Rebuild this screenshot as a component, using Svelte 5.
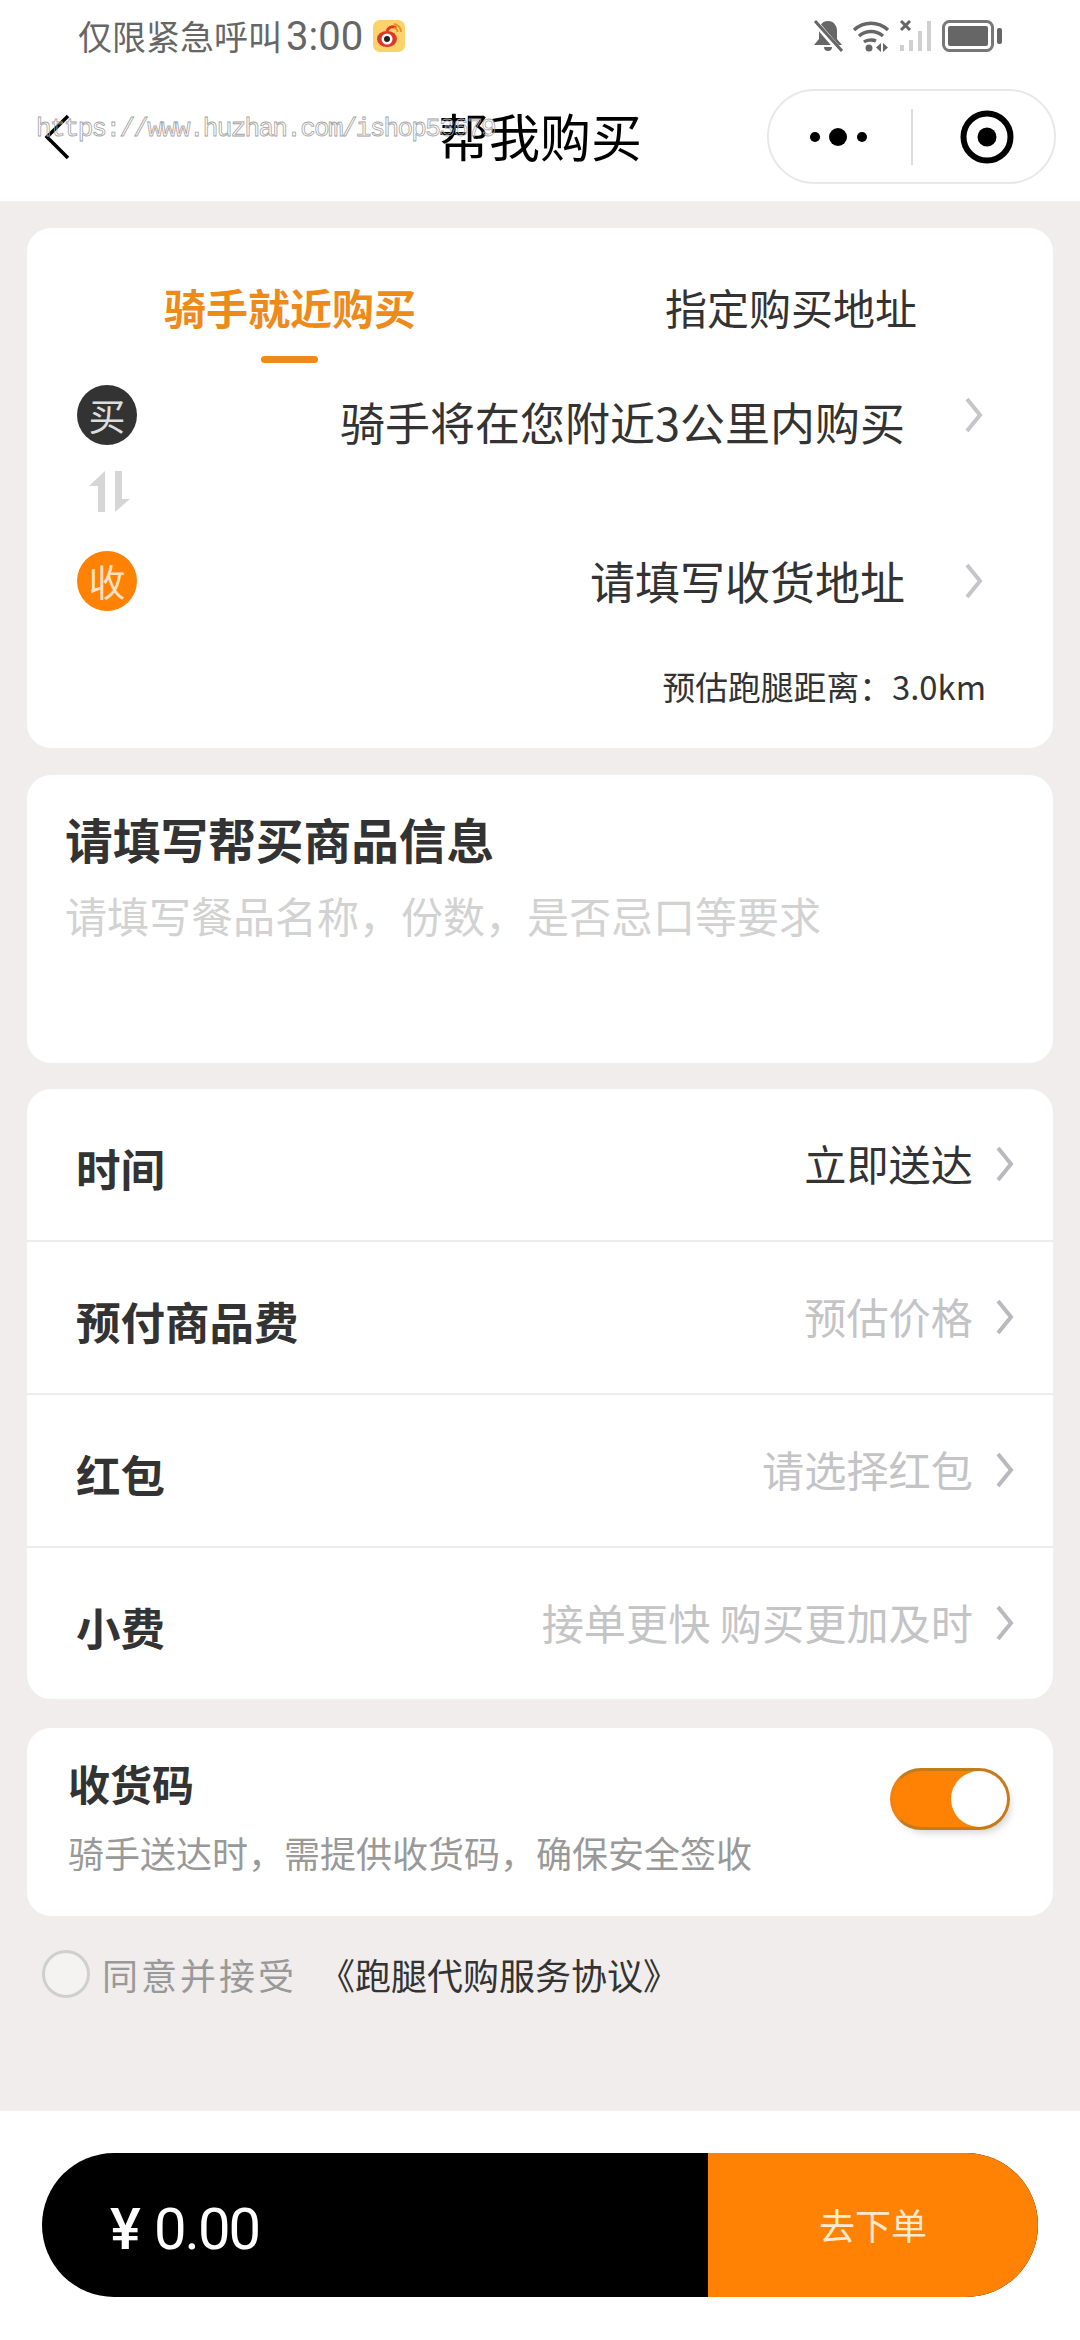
<script>
  const rows = [
    { label: '时间', value: '立即送达', dark: true },
    { label: '预付商品费', value: '预估价格' },
    { label: '红包', value: '请选择红包' },
    { label: '小费', value: '接单更快 购买更加及时' }
  ];
</script>

<div class="page">
  <header class="head">
    <div class="status">
      <div class="status-left">
        <span class="status-text">仅限紧急呼叫<span class="clock">3:00</span></span>
        <svg class="weibo" width="32" height="32" viewBox="0 0 32 32">
          <rect width="32" height="32" rx="7" fill="#fbd36a" />
          <ellipse cx="14" cy="19" rx="10" ry="8" fill="#e0352b" />
          <path d="M14 11c2-5 7-5 9-3" fill="none" stroke="#e0352b" stroke-width="3" />
          <circle cx="14" cy="19" r="5.5" fill="#fff" />
          <circle cx="14" cy="19" r="3" fill="#222" />
          <path d="M21 4a8 8 0 0 1 7 8M21 8a4 4 0 0 1 3.500 4" fill="none" stroke="#e8912a" stroke-width="1.800" />
        </svg>
      </div>
      <div class="status-right">
        <svg width="30" height="32" viewBox="0 0 30 32">
          <path d="M15 1c6 0 9 5 9 10v8l5 6H1l5-6v-8c0-5 3-10 9-10zM11 27h8a4 4 0 0 1-8 0z" fill="#666" />
          <path d="M1 1l26 30" stroke="#fff" stroke-width="6" />
          <path d="M2 1l27 30" stroke="#666" stroke-width="3" />
        </svg>
        <svg width="38" height="32" viewBox="0 0 38 32">
          <path d="M2 10c10-9 24-9 34 0M7 16c7-6 17-6 24 0M12 22c2-1.500 8-3 12-1" fill="none" stroke="#666" stroke-width="3.400" />
          <circle cx="17" cy="28" r="3.500" fill="#666" />
          <path d="M29 23v9l-5-4.500zM31 23v9l5-4.500z" fill="#666" />
        </svg>
        <svg width="34" height="32" viewBox="0 0 34 32">
          <path d="M2 1l9 9M11 1l-9 9" stroke="#666" stroke-width="3" />
          <rect x="1" y="25" width="4" height="6" fill="#d0d0d0" />
          <rect x="10" y="20" width="4" height="11" fill="#d0d0d0" />
          <rect x="19" y="11" width="4" height="20" fill="#d0d0d0" />
          <rect x="28" y="1" width="4" height="30" fill="#d0d0d0" />
        </svg>
        <svg width="60" height="32" viewBox="0 0 60 32">
          <rect x="1.500" y="1.500" width="49" height="29" rx="6" fill="none" stroke="#777" stroke-width="3" />
          <rect x="6" y="6" width="40" height="20" rx="2" fill="#666" />
          <rect x="55" y="8" width="5" height="16" rx="2" fill="#666" />
        </svg>
      </div>
    </div>
    <div class="nav">
      <svg class="back" width="30" height="48" viewBox="0 0 30 48">
        <path d="M24 3L3 24l21 21" fill="none" stroke="#000" stroke-width="3.500" />
      </svg>
      <h1>帮我购买</h1>
      <span class="watermark">https://www.huzhan.com/ishop53679</span>
      <div class="capsule">
        <svg width="58" height="20" viewBox="0 0 58 20">
          <circle cx="5" cy="10" r="5" fill="#000" />
          <circle cx="28" cy="10" r="9" fill="#000" />
          <circle cx="52" cy="10" r="5" fill="#000" />
        </svg>
        <i class="cap-line"></i>
        <svg width="54" height="54" viewBox="0 0 54 54">
          <circle cx="27" cy="27" r="23.500" fill="none" stroke="#000" stroke-width="6" />
          <circle cx="27" cy="27" r="9.500" fill="#000" />
        </svg>
      </div>
    </div>
  </header>

  <main class="main">
    <section class="card route">
      <div class="tabs">
        <div class="tab on">骑手就近购买<i></i></div>
        <div class="tab">指定购买地址</div>
      </div>
      <div class="addr">
        <span class="dot black">买</span>
        <span class="addr-text first">骑手将在您附近3公里内购买</span>
        <svg class="chev" width="20" height="36" viewBox="0 0 20 36"><path d="M3 2l13 16L3 34" fill="none" stroke="#c4c6cb" stroke-width="4" /></svg>
      </div>
      <div class="swap">
        <svg width="41" height="41" viewBox="0 0 41 41">
          <path d="M16 0v41H9V15H0zM26 0h7v28h8L26 41z" fill="#d6d6d6" />
        </svg>
      </div>
      <div class="addr">
        <span class="dot orange">收</span>
        <span class="addr-text">请填写收货地址</span>
        <svg class="chev" width="20" height="36" viewBox="0 0 20 36"><path d="M3 2l13 16L3 34" fill="none" stroke="#c4c6cb" stroke-width="4" /></svg>
      </div>
      <p class="dist">预估跑腿距离：3.0km</p>
    </section>

    <section class="card goods">
      <h2>请填写帮买商品信息</h2>
      <p>请填写餐品名称，份数，是否忌口等要求</p>
    </section>

    <section class="card list">
      {#each rows as r}
        <div class="row">
          <span class="row-label">{r.label}</span>
          <span class="row-value" class:dark={r.dark}>{r.value}</span>
          <svg class="chev" width="20" height="36" viewBox="0 0 20 36"><path d="M3 2l13 16L3 34" fill="none" stroke="#b8babf" stroke-width="4" /></svg>
        </div>
      {/each}
    </section>

    <section class="card code">
      <div>
        <h3>收货码</h3>
        <p>骑手送达时，需提供收货码，确保安全签收</p>
      </div>
      <div class="switch"><i></i></div>
    </section>

    <div class="agree">
      <i class="radio"></i>
      <span class="agree-a">同意并接受</span>
      <span class="agree-b">《跑腿代购服务协议》</span>
    </div>
  </main>

  <footer class="foot">
    <div class="pay">
      <div class="price"><span class="yen">¥</span><span class="amount">0.00</span></div>
      <div class="go">去下单</div>
    </div>
  </footer>
</div>

<style>
  :global(body) {
    margin: 0;
    background: #f0edec;
  }
  .page {
    width: 1080px;
    height: 2340px;
    display: flex;
    flex-direction: column;
    background: #f0edec;
    font-family: "Noto Sans CJK SC", "Noto Sans", sans-serif;
    color: #333;
  }
  .head {
    height: 201px;
    flex: none;
    background: #fff;
    display: flex;
    flex-direction: column;
  }
  .status {
    height: 72px;
    padding: 0 78px 0 78px;
    display: flex;
    align-items: center;
    justify-content: space-between;
  }
  .status-left,
  .status-right {
    display: flex;
    align-items: center;
  }
  .status-left {
    gap: 10px;
  }
  .status-right {
    gap: 9px;
  }
  .status-text {
    font-size: 34px;
    line-height: 44px;
    color: #666;
  }
  .clock {
    margin-left: 4px;
    font-family: "Roboto", sans-serif;
    font-size: 40px;
  }
  .nav {
    position: relative;
    flex: 1;
    display: flex;
    align-items: center;
    padding: 0 24px 0 44px;
  }
  .back {
    flex: none;
    position: relative;
  }
  .nav h1 {
    position: absolute;
    left: 0;
    right: 0;
    top: 32px;
    margin: 0;
    text-align: center;
    font-size: 51px;
    line-height: 62px;
    font-weight: 400;
    color: #000;
  }
  .capsule {
    margin-left: auto;
    width: 289px;
    height: 95px;
    box-sizing: border-box;
    border: 2px solid #e8e8e8;
    border-radius: 48px;
    display: flex;
    align-items: center;
    padding: 0 0 0 41px;
    position: relative;
  }
  .cap-line {
    width: 2px;
    height: 56px;
    background: #ddd;
    margin: 0 47px 0 43px;
  }
  .watermark {
    position: absolute;
    left: 36px;
    top: 42px;
    font-family: "Liberation Mono", monospace;
    font-size: 26px;
    letter-spacing: -1.700px;
    line-height: 30px;
    color: transparent;
    -webkit-text-stroke: 0.800px #a4a4a4;
    white-space: nowrap;
  }
  .main {
    flex: 1;
    padding: 27px 27px 0;
    display: flex;
    flex-direction: column;
  }
  .card {
    background: #fff;
    border-radius: 24px;
  }
  .route {
    height: 520px;
    margin-bottom: 27px;
    padding: 0 68px 0 50px;
    box-sizing: border-box;
  }
  .tabs {
    height: 156px;
    display: flex;
    margin-right: -68px;
    margin-left: -50px;
    padding-left: 137px;
    padding-top: 52px;
    box-sizing: border-box;
  }
  .tab {
    font-size: 42px;
    line-height: 54px;
    position: relative;
    color: #333;
    flex: none;
  }
  .tab.on {
    color: #ee8a1a;
    font-weight: 700;
    width: 501px;
  }
  .tab i {
    position: absolute;
    left: 97px;
    top: 76px;
    width: 57px;
    height: 7px;
    border-radius: 4px;
    background: #ee8a1a;
  }
  .addr {
    display: flex;
    align-items: center;
    height: 62px;
  }
  .dot {
    width: 60px;
    height: 60px;
    flex: none;
    border-radius: 50%;
    display: flex;
    align-items: center;
    justify-content: center;
    font-size: 37px;
    line-height: 1;
  }
  .dot.black {
    background: #333;
    color: #ddd;
  }
  .dot.orange {
    background: #ff8205;
    color: #ffe2c4;
  }
  .addr-text {
    margin-left: auto;
    font-size: 45px;
    line-height: 56px;
    color: #333;
  }
  .addr-text.first {
    margin-top: 14px;
  }
  .addr .chev {
    margin-left: 59px;
    margin-right: 1px;
    flex: none;
  }
  .swap {
    height: 104px;
    box-sizing: border-box;
    padding: 25px 0 0 12px;
  }
  .swap svg {
    display: block;
  }
  .dist {
    margin: 53px -1px 0 0;
    text-align: right;
    font-size: 32.800px;
    line-height: 42px;
    color: #333;
  }
  .goods {
    height: 288px;
    margin-bottom: 26px;
    padding: 35px 38px 0;
    box-sizing: border-box;
  }
  .goods h2 {
    margin: 0;
    font-size: 47.700px;
    line-height: 58px;
    font-weight: 700;
    color: #333;
  }
  .goods p {
    margin: 20px 0 0;
    font-size: 42px;
    line-height: 54px;
    color: #d2d2d2;
  }
  .list {
    height: 610px;
    margin-bottom: 29px;
    display: flex;
    flex-direction: column;
  }
  .row {
    flex: 1;
    display: flex;
    align-items: center;
    padding: 0 38px 0 49px;
    border-top: 2px solid #ececec;
  }
  .row:first-child {
    border-top: 0;
  }
  .row-label {
    font-size: 44.500px;
    font-weight: 700;
    color: #333;
    margin-top: 6px;
  }
  .row-value {
    margin-left: auto;
    font-size: 42.200px;
    color: #c4c4c6;
    margin-top: -4px;
  }
  .row-value.dark {
    color: #333;
  }
  .row .chev {
    margin-left: 22px;
    margin-top: -2px;
    flex: none;
  }
  .code {
    height: 188px;
    display: flex;
    justify-content: space-between;
    padding: 28px 43px 0 41px;
    box-sizing: border-box;
  }
  .code h3 {
    margin: 0;
    font-size: 42px;
    line-height: 54px;
    font-weight: 700;
  }
  .code p {
    margin: 18px 0 0;
    font-size: 36px;
    line-height: 48px;
    color: #999;
  }
  .switch {
    width: 120px;
    height: 62px;
    margin-top: 12px;
    box-sizing: border-box;
    border: 3px solid #c47b1e;
    border-left-color: #f08010;
    border-radius: 31px;
    background: #ff8205;
    display: flex;
    justify-content: flex-end;
    align-items: center;
    box-shadow: 4px 6px 8px -4px rgba(0, 0, 0, 0.2);
  }
  .switch i {
    width: 56px;
    height: 56px;
    border-radius: 50%;
    background: #fff;
  }
  .agree {
    display: flex;
    align-items: center;
    padding: 32px 0 0 15px;
  }
  .radio {
    width: 48px;
    height: 48px;
    box-sizing: border-box;
    border: 3px solid #cfcfcf;
    border-radius: 50%;
    background: #f5f3f2;
  }
  .agree-a {
    margin-left: 12px;
    font-size: 36px;
    letter-spacing: 3px;
    color: #999;
  }
  .agree-b {
    margin-left: 22px;
    font-size: 36px;
    color: #333;
  }
  .foot {
    height: 229px;
    flex: none;
    background: #fff;
    padding: 42px 42px 0;
    box-sizing: border-box;
  }
  .pay {
    height: 144px;
    border-radius: 72px;
    background: #000;
    overflow: hidden;
    display: flex;
  }
  .price {
    flex: 1;
    padding-left: 68px;
    line-height: 152px;
    font-family: "Roboto", "Noto Sans CJK SC", sans-serif;
    font-size: 58px;
    color: #fff;
    display: flex;
  }
  .yen {
    font-weight: 500;
    width: 44px;
  }
  .amount {
    letter-spacing: -2px;
  }
  .go {
    width: 330px;
    background: #ff8205;
    color: #ffe9cf;
    font-size: 36px;
    line-height: 142px;
    text-align: center;
  }
</style>
